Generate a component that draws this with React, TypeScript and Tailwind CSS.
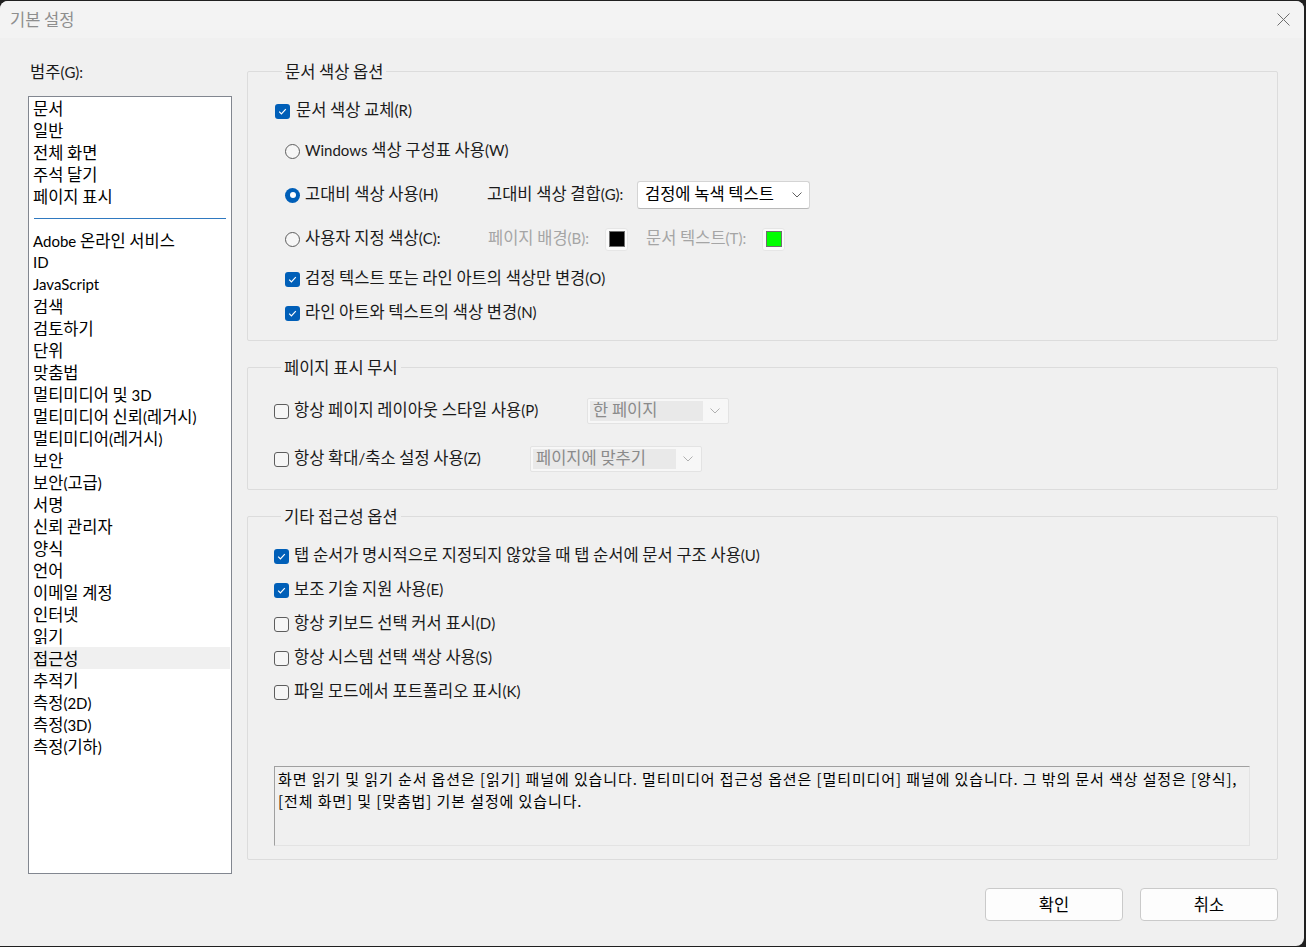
import React from "react";

const categories = [
  "문서",
  "일반",
  "전체 화면",
  "주석 달기",
  "페이지 표시",
  "-",
  "Adobe 온라인 서비스",
  "ID",
  "JavaScript",
  "검색",
  "검토하기",
  "단위",
  "맞춤법",
  "멀티미디어 및 3D",
  "멀티미디어 신뢰(레거시)",
  "멀티미디어(레거시)",
  "보안",
  "보안(고급)",
  "서명",
  "신뢰 관리자",
  "양식",
  "언어",
  "이메일 계정",
  "인터넷",
  "읽기",
  "접근성",
  "추적기",
  "측정(2D)",
  "측정(3D)",
  "측정(기하)",
];

// Hangul runs are set a bit larger than the latin parts, like Malgun Gothic
function K({ t }: { t: string }) {
  const parts = t.split(/([\uAC00-\uD7A3]+(?: +[\uAC00-\uD7A3]+)*)/);
  return (
    <span className="pb-[4px] font-['Lato','Noto_Sans_CJK_KR',sans-serif] text-[15px] leading-[22px]">
      {parts.map((p, i) =>
        i % 2 === 1 ? (
          <span key={i} className="font-['Noto_Sans_CJK_KR',sans-serif] text-[16.5px]">
            {p}
          </span>
        ) : (
          <React.Fragment key={i}>{p}</React.Fragment>
        )
      )}
    </span>
  );
}

function Check({ checked }: { checked?: boolean }) {
  if (checked) {
    return (
      <span className="flex h-[15px] w-[15px] shrink-0 items-center justify-center rounded-[3px] bg-[#005fb8]">
        <svg width="15" height="15" viewBox="0 0 15 15">
          <path d="M4.2 7.6 L6.4 9.8 L10.8 5.2" fill="none" stroke="#fff" strokeWidth="1.2" />
        </svg>
      </span>
    );
  }
  return <span className="h-[15px] w-[15px] shrink-0 rounded-[3px] border border-[#5d5d5d] bg-[#f6f6f6]" />;
}

function Radio({ checked }: { checked?: boolean }) {
  if (checked) {
    return (
      <span className="flex h-[15px] w-[15px] shrink-0 items-center justify-center rounded-full bg-[#005fb8]">
        <span className="h-[6px] w-[6px] rounded-full bg-white" />
      </span>
    );
  }
  return <span className="h-[15px] w-[15px] shrink-0 rounded-full border border-[#5d5d5d] bg-[#f6f6f6]" />;
}

function Chevron({ color = "#5f5f5f" }: { color?: string }) {
  return (
    <svg width="10" height="6" viewBox="0 0 10 6">
      <path d="M0.5 0.5 L5 5 L9.5 0.5" fill="none" stroke={color} strokeWidth="1" />
    </svg>
  );
}

function DisabledSelect({ label, width }: { label: string; width: string }) {
  return (
    <div className={`flex h-[26px] items-center rounded-[2px] border border-[#e3e3e3] bg-[#f7f7f7] p-[2px] ${width}`}>
      <div className="flex h-full flex-1 items-center bg-[#e9e9e9] pl-[3px] text-[#8a8a8a]">
        <K t={label} />
      </div>
      <div className="flex w-[23px] justify-center">
        <Chevron color="#b0b0b0" />
      </div>
    </div>
  );
}

function Legend({ children }: { children: string }) {
  return (
    <legend className="ml-[7px] px-[3px] leading-[22px]">
      <K t={children} />
    </legend>
  );
}

function Swatch({ color }: { color: string }) {
  return (
    <div className="flex h-[23px] w-[23px] shrink-0 items-center justify-center rounded-[3px] border border-[#e6e6e6] bg-[#fafafa]">
      <div className={`h-[16px] w-[16px] border border-[#6f6f6f] ${color}`} />
    </div>
  );
}

export default function App() {
  return (
    <div className="h-[947px] w-[1306px] bg-[#202020] pt-[1px] font-['Noto_Sans_CJK_KR',sans-serif] text-[15px] text-[#1a1a1a]">
      <div className="flex h-[945px] w-[1304px] flex-col overflow-hidden rounded-t-[8px] rounded-br-[8px] bg-[#f0f0f0]">
        {/* title bar */}
        <div className="flex h-[37px] shrink-0 items-center justify-between bg-[#f3f3f3] pl-[10px] pr-[14px]">
          <span className="text-[#8e8e8e]">
            <K t="기본 설정" />
          </span>
          <svg width="13" height="13" viewBox="0 0 13 13">
            <path d="M0.5 0.5 L12.5 12.5 M12.5 0.5 L0.5 12.5" stroke="#6e6e6e" strokeWidth="1" />
          </svg>
        </div>

        <div className="flex flex-1 gap-[15px] pl-[28px] pr-[26px] pt-[22px]">
          {/* categories */}
          <div className="flex w-[204px] shrink-0 flex-col">
            <div className="h-[22px] pl-[2px] leading-[22px]">
              <K t="범주(G):" />
            </div>
            <div className="mt-[14px] h-[778px] border border-[#828790] bg-white px-[1px]">
              {categories.map((c, i) =>
                c === "-" ? (
                  <div key={i} className="flex h-[22px] items-center px-[4px]">
                    <div className="h-[1px] w-full bg-[#2f79c0]" />
                  </div>
                ) : (
                  <div
                    key={i}
                    className={`h-[22px] whitespace-nowrap pl-[3px] leading-[22px] text-black ${c === "접근성" ? "bg-[#f0f0f0]" : ""}`}
                  >
                    <K t={c} />
                  </div>
                )
              )}
            </div>
          </div>

          {/* options */}
          <div className="flex flex-1 flex-col">
            <fieldset className="h-[281px] rounded-[2px] border border-[#dcdcdc] pl-[27px]">
              <Legend>문서 색상 옵션</Legend>
              <div className="mt-[14px] flex h-[28px] items-center gap-[6px]">
                <Check checked />
                <K t="문서 색상 교체(R)" />
              </div>
              <div className="ml-[10px] mt-[12px] flex h-[28px] items-center gap-[5px]">
                <Radio />
                <K t="Windows 색상 구성표 사용(W)" />
              </div>
              <div className="ml-[10px] mt-[16px] flex h-[28px] items-center">
                <div className="flex w-[202px] items-center gap-[5px]">
                  <Radio checked />
                  <K t="고대비 색상 사용(H)" />
                </div>
                <div className="flex w-[150px] whitespace-nowrap">
                  <K t="고대비 색상 결합(G):" />
                </div>
                <div className="flex h-[28px] w-[173px] items-center justify-between rounded-[3px] border border-[#d4d4d4] border-b-[#b8b8b8] bg-white pl-[7px] pr-[7px]">
                  <div className="flex text-black">
                    <K t="검정에 녹색 텍스트" />
                  </div>
                  <Chevron />
                </div>
              </div>
              <div className="ml-[10px] mt-[16px] flex h-[28px] items-center">
                <div className="flex w-[203px] items-center gap-[5px]">
                  <Radio />
                  <K t="사용자 지정 색상(C):" />
                </div>
                <div className="flex w-[117px] whitespace-nowrap text-[#a5a5a5]">
                  <K t="페이지 배경(B):" />
                </div>
                <Swatch color="bg-black" />
                <div className="ml-[18px] flex w-[116px] whitespace-nowrap text-[#a5a5a5]">
                  <K t="문서 텍스트(T):" />
                </div>
                <Swatch color="bg-[#00ff00]" />
              </div>
              <div className="ml-[10px] mt-[12px] flex h-[28px] items-center gap-[5px]">
                <Check checked />
                <K t="검정 텍스트 또는 라인 아트의 색상만 변경(O)" />
              </div>
              <div className="ml-[10px] mt-[6px] flex h-[28px] items-center gap-[5px]">
                <Check checked />
                <K t="라인 아트와 텍스트의 색상 변경(N)" />
              </div>
            </fieldset>

            <fieldset className="mt-[15px] h-[134px] rounded-[2px] border border-[#dcdcdc] pl-[26px]">
              <Legend>페이지 표시 무시</Legend>
              <div className="mt-[18px] flex h-[28px] items-center">
                <div className="flex w-[313px] items-center gap-[5px]">
                  <Check />
                  <K t="항상 페이지 레이아웃 스타일 사용(P)" />
                </div>
                <DisabledSelect label="한 페이지" width="w-[142px]" />
              </div>
              <div className="mt-[20px] flex h-[28px] items-center">
                <div className="flex w-[256px] items-center gap-[5px]">
                  <Check />
                  <K t="항상 확대/축소 설정 사용(Z)" />
                </div>
                <DisabledSelect label="페이지에 맞추기" width="w-[172px]" />
              </div>
            </fieldset>

            <fieldset className="mt-[15px] h-[355px] rounded-[2px] border border-[#dcdcdc] pl-[26px] pr-[27px]">
              <Legend>기타 접근성 옵션</Legend>
              <div className="mt-[14px] flex flex-col gap-[6px]">
                {[
                  ["탭 순서가 명시적으로 지정되지 않았을 때 탭 순서에 문서 구조 사용(U)", true],
                  ["보조 기술 지원 사용(E)", true],
                  ["항상 키보드 선택 커서 표시(D)", false],
                  ["항상 시스템 선택 색상 사용(S)", false],
                  ["파일 모드에서 포트폴리오 표시(K)", false],
                ].map(([label, on], i) => (
                  <div key={i} className="flex h-[28px] items-center gap-[5px]">
                    <Check checked={on as boolean} />
                    <K t={label as string} />
                  </div>
                ))}
              </div>
              <div className="mt-[60px] h-[80px] whitespace-nowrap border border-[#a0a0a0] border-b-[#e3e3e3] border-r-[#e3e3e3] bg-[#f0f0f0] px-[3px] pt-[1px] text-[15px] leading-[22px] tracking-[0.9px] text-black">
                화면 읽기 및 읽기 순서 옵션은 [읽기] 패널에 있습니다. 멀티미디어 접근성 옵션은 [멀티미디어] 패널에 있습니다. 그 밖의 문서 색상 설정은 [양식],
                <br />
                [전체 화면] 및 [맞춤법] 기본 설정에 있습니다.
              </div>
            </fieldset>

            <div className="mt-[28px] flex justify-end gap-[17px]">
              <button className="h-[33px] w-[138px] rounded-[4px] border border-[#cacaca] bg-[#fdfdfd] text-black">
                <K t="확인" />
              </button>
              <button className="h-[33px] w-[138px] rounded-[4px] border border-[#cacaca] bg-[#fdfdfd] text-black">
                <K t="취소" />
              </button>
            </div>
          </div>
        </div>
      </div>
    </div>
  );
}
